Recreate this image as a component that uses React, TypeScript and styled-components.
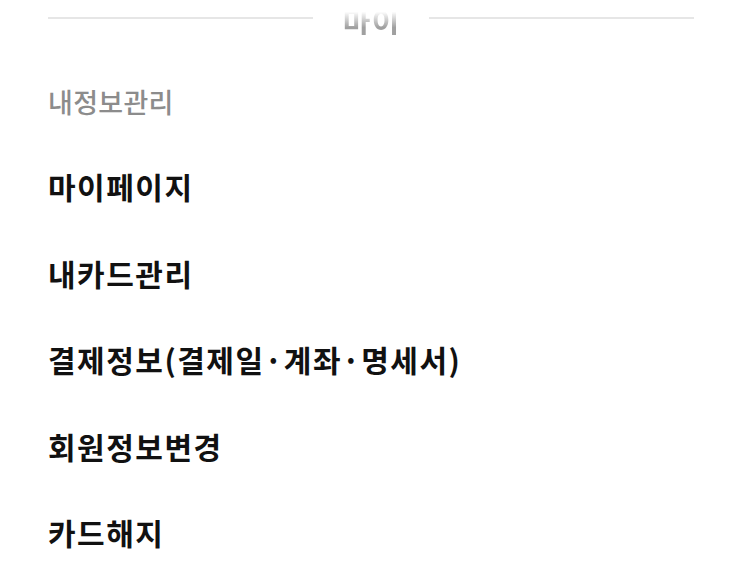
import React from "react";
import styled, { createGlobalStyle } from "styled-components";

const GlobalStyle = createGlobalStyle`
  html, body {
    margin: 0;
    padding: 0;
    background: #ffffff;
  }
  body {
    font-family: "Noto Sans CJK KR", "Noto Sans", sans-serif;
    overflow: hidden;
  }
`;

const Page = styled.div`
  padding: 5px 49px 0 48px;
  display: flex;
  flex-direction: column;
`;

const SectionHeader = styled.div`
  display: flex;
  align-items: flex-start;
  gap: 28px;
  height: 30px;
`;

const Rule = styled.span`
  flex: 1;
  height: 2px;
  margin-top: 12px;
  background: #e6e6e6;
`;

const SectionTitle = styled.h2`
  margin: 0;
  font-size: 30px;
  line-height: 30px;
  font-weight: 700;
  letter-spacing: 1.5px;
  padding-left: 1.5px;
  background: linear-gradient(
    to bottom,
    rgba(160, 160, 160, 0) 0%,
    rgba(160, 160, 160, 0) 22%,
    rgba(160, 160, 160, 1) 75%
  );
  -webkit-background-clip: text;
  background-clip: text;
  color: transparent;
`;

const Menu = styled.ul`
  list-style: none;
  margin: 0;
  padding: 50px 0 0;
  display: flex;
  flex-direction: column;
`;

const MenuItem = styled.li<{ $muted?: boolean }>`
  height: ${(p) => (p.$muted ? "84px" : "86.5px")};
  display: flex;
  align-items: flex-start;
  font-size: ${(p) => (p.$muted ? "27px" : "30px")};
  line-height: 34px;
  font-weight: ${(p) => (p.$muted ? 500 : 700)};
  color: ${(p) => (p.$muted ? "#8c8c8c" : "#111111")};
  letter-spacing: ${(p) => (p.$muted ? "0.3px" : "1.5px")};
  white-space: nowrap;
`;

const items = [
  "마이페이지",
  "내카드관리",
  "결제정보(결제일·계좌·명세서)",
  "회원정보변경",
  "카드해지",
];

export default function App() {
  return (
    <>
      <GlobalStyle />
      <Page>
        <SectionHeader>
          <Rule />
          <SectionTitle>마이</SectionTitle>
          <Rule />
        </SectionHeader>
        <Menu>
          <MenuItem $muted>내정보관리</MenuItem>
          {items.map((t) => (
            <MenuItem key={t}>{t}</MenuItem>
          ))}
        </Menu>
      </Page>
    </>
  );
}
